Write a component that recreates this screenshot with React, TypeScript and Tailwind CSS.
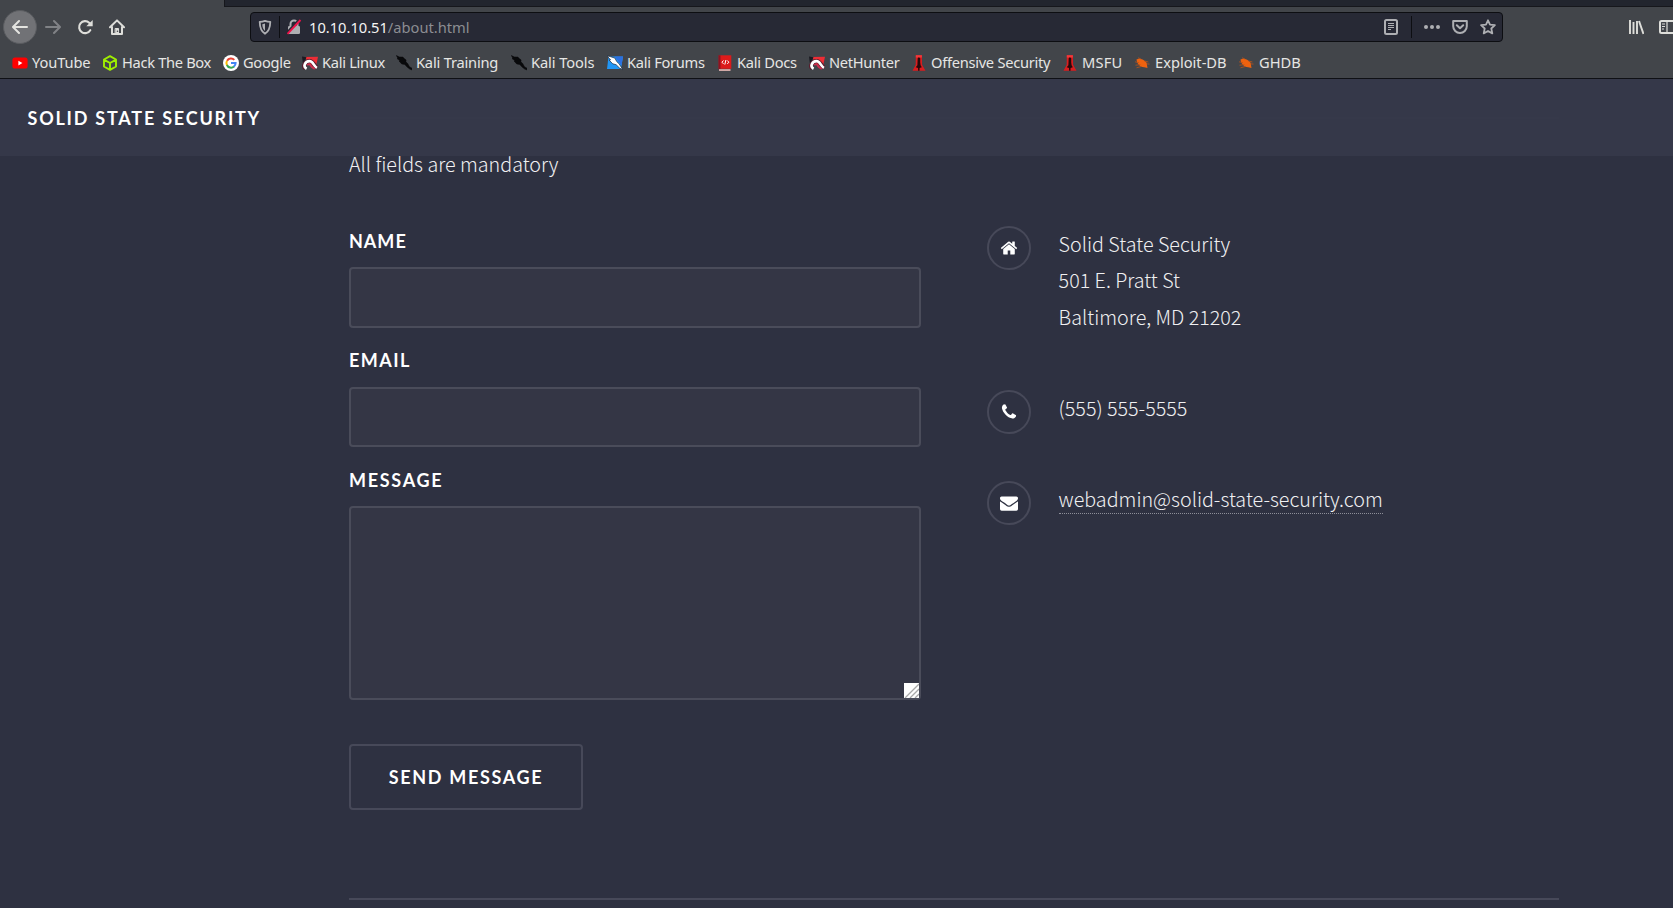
import type { ReactNode } from "react";

/* ---------- Bookmark favicons ---------- */

function Favicon({ children }: { children: ReactNode }) {
  return (
    <svg viewBox="0 0 16 16" className="h-4 w-4 shrink-0">
      {children}
    </svg>
  );
}

const YouTube = () => (
  <Favicon>
    <rect x="0.4" y="2.4" width="15.2" height="11.2" rx="2.6" fill="#f00" />
    <path d="M6.4 5.8v4.6l4-2.3z" fill="#fff" />
  </Favicon>
);

const HackTheBox = () => (
  <Favicon>
    <path
      d="M8 1.2l6 3.3v7L8 14.9 2 11.500v-7zM2.300 4.800L8 8l5.700-3.200M8 8v6.500"
      fill="none"
      stroke="#9fef00"
      strokeWidth="1.9"
      strokeLinejoin="round"
    />
  </Favicon>
);

const Google = () => (
  <Favicon>
    <circle cx="8" cy="8" r="8" fill="#fff" />
    <path d="M4.100 5.800A4.500 4.500 0 0 1 11.300 4.900" fill="none" stroke="#ea4335" strokeWidth="2" />
    <path d="M4 10.200a4.600 4.600 0 0 1 0-4.400" fill="none" stroke="#fbbc05" strokeWidth="2" />
    <path d="M11 11.500A4.500 4.500 0 0 1 3.900 10" fill="none" stroke="#34a853" strokeWidth="2" />
    <path d="M8 8.100h4.600a4.500 4.500 0 0 1-1.700 3.500" fill="none" stroke="#4285f4" strokeWidth="2" />
  </Favicon>
);

const KaliRed = () => (
  <Favicon>
    <path d="M2.500 2L16 1.800 13.500 13.500 8 9z" fill="#ee2d35" />
    <path d="M0 1.500l4.500.8L3.300 5l-2.500 3z" fill="#1b1b22" />
    <path d="M3.200 13.600C.6 10.800 3.400 6 7.800 6c3.400 0 3.700 4.600 7.400 6.800" fill="none" stroke="#5b1a2b" strokeWidth="4.200" />
    <path d="M4.600 13.800C.7 11.800 2.800 6.300 7.600 6.200c3.700 0 3.500 4.300 7.300 6.600" fill="none" stroke="#fff" strokeWidth="2.700" />
    <path d="M5.300 10.300c1.200-2 2.600-1.200 3.500.5.900 1.600 2 2.400 3.900 3.100" fill="none" stroke="#d02c4c" strokeWidth="1.800" />
  </Favicon>
);

const KaliBlack = () => (
  <Favicon>
    <path
      d="M.3.5l3 1.400 3.500.2 1.800 1.700 1.500 1.100-.2 1.900 1.800 1.800 1.800 3.200 2.900 1.600.3 1.800-3-1.100-2.700-2.200-2.200-2.300-3.100-.7-2.700-3 1.100-.2L1 3.600l1-.2z"
      fill="#08090b"
      stroke="#08090b"
      strokeWidth="0.500"
    />
  </Favicon>
);

const KaliForums = () => (
  <Favicon>
    <path d="M1.500 1.500h14.500L14 14H0z" fill="#2196f5" />
    <path d="M7.500 1.500H16l-1.500 9z" fill="#2c6fe0" />
    <path
      d="M0 .8l3.600.9 4.300 1.400 1.800 3.400 2.600 2.500 3.500 5.700-3.300-1.700-3.400-3.300-3.400-.9-3.600-3.700 1.500-.2z"
      fill="#fff"
      stroke="#16263d"
      strokeWidth="0.700"
    />
  </Favicon>
);

const KaliDocs = () => (
  <Favicon>
    <path d="M1.800.3h12.500v13.500H1.800z" fill="#dc1a1a" />
    <path d="M1.500.3h2v14h-2z" fill="#8e1220" />
    <path d="M2 14.200h11.500v1.700H2z" fill="#e3b5b2" />
    <path d="M6.500 5.500L5 7.200l1.500 1.700M10.300 5.500l1.500 1.700-1.500 1.700M8.900 5l-1.100 4.600" fill="none" stroke="#fff" strokeWidth="1" />
  </Favicon>
);

const OffSec = () => (
  <Favicon>
    <path d="M4.800.2h6.100l.2 9.500 3.400 6.100H1.500l3.200-6.100z" fill="#d81d1f" />
    <path d="M4.800.2h6.100v2.300H4.800z" fill="#f0393b" />
    <path d="M7.900 2.300l1.300 1v3.900l.4 3 1.200 2.100-2.200.6-.1 2.900H7.100l-.1-2.900-2.200-.6 1.600-2.100.3-6.900z" fill="#26090b" />
  </Favicon>
);

const ExploitBug = () => (
  <Favicon>
    <path d="M1.500 4.500C3.600 3 7 3.500 9.200 5.600l2.700 2.300.1 2 .5 3-3.300-.7C5.500 12.300 2 9.300 1.500 4.500z" fill="#ee620f" />
    <path d="M0 6.800l4 .9M.5 10.200l5-.5M1.500 12.800l5.500-1.500M6 4L3 2.800M9.500 6l3.900 1M11 8.800l3.500.3" stroke="#b9541a" strokeWidth="0.800" fill="none" />
  </Favicon>
);

const bookmarks: { label: string; icon: () => ReactNode; box: string; tracking: string }[] = [
  { label: "YouTube", icon: YouTube, box: "w-[90px]", tracking: "tracking-[-0.1px]" },
  { label: "Hack The Box", icon: HackTheBox, box: "w-[121px]", tracking: "tracking-[-0.32px]" },
  { label: "Google", icon: Google, box: "w-[79px]", tracking: "tracking-[-0.3px]" },
  { label: "Kali Linux", icon: KaliRed, box: "w-[94px]", tracking: "tracking-[-0.3px]" },
  { label: "Kali Training", icon: KaliBlack, box: "w-[115px]", tracking: "tracking-[-0.2px]" },
  { label: "Kali Tools", icon: KaliBlack, box: "w-[96px]", tracking: "tracking-[-0.1px]" },
  { label: "Kali Forums", icon: KaliForums, box: "w-[110px]", tracking: "tracking-[-0.3px]" },
  { label: "Kali Docs", icon: KaliDocs, box: "w-[92px]", tracking: "tracking-[-0.28px]" },
  { label: "NetHunter", icon: KaliRed, box: "w-[102px]", tracking: "tracking-[-0.3px]" },
  { label: "Offensive Security", icon: OffSec, box: "w-[151px]", tracking: "tracking-[-0.28px]" },
  { label: "MSFU", icon: OffSec, box: "w-[73px]", tracking: "tracking-[0.2px]" },
  { label: "Exploit-DB", icon: ExploitBug, box: "w-[104px]", tracking: "tracking-normal" },
  { label: "GHDB", icon: ExploitBug, box: "w-[70px]", tracking: "tracking-normal" },
];

/* ---------- Browser chrome ---------- */

function Toolbar() {
  return (
    <div className="flex h-[43px] items-start">
      <div className="ml-[3px] mt-[3px] flex h-[34px] w-[34px] shrink-0 items-center justify-center rounded-full border border-[#5a5c60] bg-[#717276]">
        <svg viewBox="0 0 16 16" className="h-4 w-4 shrink-0" fill="none" stroke="#e4e4e0" strokeWidth="2" strokeLinecap="round" strokeLinejoin="round">
          <path d="M15 8H1.200M7 2L1 8l6 6" />
        </svg>
      </div>
      <svg viewBox="0 0 16 16" className="ml-2 mt-3 h-4 w-4 shrink-0" fill="none" stroke="#808286" strokeWidth="2" strokeLinecap="round" strokeLinejoin="round">
        <path d="M1 8h13.800M9 2l6 6-6 6" />
      </svg>
      <svg viewBox="0 0 16 16" className="ml-4 mt-3 h-4 w-4 shrink-0" fill="none" stroke="#dededa" strokeWidth="2.100" strokeLinecap="round">
        <path d="M13.300 11.200A6 6 0 1 1 12.200 3.700l1.400 1.500" />
        <path d="M15.700 1v6.300H9.300z" fill="#dededa" stroke="none" />
      </svg>
      <svg viewBox="0 0 16 16" className="ml-4 mt-3 h-4 w-4 shrink-0" fill="none" stroke="#dededa" strokeWidth="2" strokeLinecap="round" strokeLinejoin="round">
        <path d="M1 8.300L8 1.400l7 6.900M3 8v7h10V8" />
        <path d="M6.500 9.500h3V15h-3z" strokeWidth="1" fill="#dededa" />
        <circle cx="8.500" cy="12.300" r=".8" fill="#42454a" stroke="none" />
      </svg>

      <div className="ml-[125px] mt-[5px] flex h-[30px] w-[1253px] shrink-0 items-center rounded border border-[#0d0e12] bg-[#272935]">
        <svg viewBox="0 0 16 16" className="ml-[6px] h-4 w-4 shrink-0" fill="none" stroke="#aeafb3" strokeWidth="1.800" strokeLinejoin="round">
          <path d="M8 1.800c1.800.7 3.600 1 5.300 1-.1 5.600-1.200 9.600-5.300 12-4.100-2.400-5.200-6.400-5.300-12 1.700 0 3.500-.3 5.300-1z" />
          <path d="M8 4.600v7.300C6 10.300 5.400 8 5.300 5.300z" fill="#aeafb3" stroke="none" />
        </svg>
        <div className="ml-[6px] h-[22px] w-px bg-[#0d0e12]" />
        <svg viewBox="0 0 16 16" className="ml-[6px] h-4 w-4 shrink-0">
          <path d="M4.500 7.500V5a3.500 3.500 0 0 1 7 0v2.500" fill="none" stroke="#aeafb3" strokeWidth="2" />
          <rect x="2" y="7" width="12" height="8" rx="1.300" fill="#aeafb3" />
          <path d="M0.500 14L13 .6" stroke="#272935" strokeWidth="2" />
          <path d="M1.500 14.800L14.500 1" stroke="#f0124a" strokeWidth="1.900" />
        </svg>
        <span className="ml-[7px] whitespace-pre font-['Noto_Sans',sans-serif] text-[14.670px] leading-5 text-[#8c8d92]">
          <span className="text-[#f4f4f4]">10.10.10.51</span>/about.html
        </span>
        <div className="ml-auto mr-[6px] flex items-center">
          <svg viewBox="0 0 16 16" className="h-4 w-4" fill="none" stroke="#aeafb3">
            <rect x="2" y="1" width="12" height="14" rx="1.500" strokeWidth="2" />
            <path d="M5 4.500h6M5 6.500h6M5 8.500h6M5 10.500h3" />
          </svg>
          <div className="ml-[12px] h-[22px] w-px bg-[#0d0e12]" />
          <svg viewBox="0 0 16 16" className="ml-3 h-4 w-4" fill="#aeafb3">
            <circle cx="2" cy="8" r="2" />
            <circle cx="8" cy="8" r="2" />
            <circle cx="14" cy="8" r="2" />
          </svg>
          <svg viewBox="0 0 16 16" className="ml-3 h-4 w-4" fill="none" stroke="#aeafb3" strokeWidth="2" strokeLinejoin="round" strokeLinecap="round">
            <path d="M1.200 2h13.600v5.200a6.800 6.800 0 0 1-13.600 0zM4.800 6.300L8 9.300l3.200-3" />
          </svg>
          <svg viewBox="0 0 16 16" className="ml-3 h-4 w-4" fill="none" stroke="#aeafb3" strokeWidth="1.800" strokeLinejoin="round">
            <path d="M8 1.300l2 4.400 4.900.5-3.600 3.300 1 4.900L8 12l-4.300 2.400 1-4.900L1.100 6.200 6 5.700z" />
          </svg>
        </div>
      </div>

      <svg viewBox="0 0 16 16" className="ml-[125px] mt-3 h-4 w-4 shrink-0" fill="none" stroke="#dededa" strokeWidth="2">
        <path d="M2 1v14M5.500 3v12M9 2v13" strokeWidth="1.900" />
        <path d="M11 2l4.500 13" />
      </svg>
      <svg viewBox="0 0 16 16" className="ml-[15px] mt-3 h-4 w-4 shrink-0" fill="none" stroke="#dededa" strokeWidth="2">
        <rect x="1" y="2" width="15" height="12" rx="1.500" />
        <path d="M8 2v12M3 5h3M3 7.500h3M3 10h2" strokeWidth="1.200" />
      </svg>
    </div>
  );
}

function BrowserChrome() {
  return (
    <div className="h-[79px] w-full overflow-hidden border-b border-[#0f1015] bg-[#42454a]">
      <div className="ml-[224px] h-[7px] border-b border-l border-[#16171c] bg-[#22252e]" />
      <Toolbar />
      <div className="ml-3 flex h-[26px] items-center">
        {bookmarks.map(({ label, icon: Icon, box, tracking }) => (
          <div key={label} className={`flex shrink-0 items-center gap-1 ${box}`}>
            <Icon />
            <span className={`-mt-[2px] whitespace-nowrap font-['Noto_Sans',sans-serif] text-[14.670px] leading-5 text-[#e6e6e4] ${tracking}`}>
              {label}
            </span>
          </div>
        ))}
      </div>
    </div>
  );
}

/* ---------- Page ---------- */

const HOME =
  "M1472 992v480q0 26-19 45t-45 19h-384v-384h-256v384h-384q-26 0-45-19t-19-45v-480q0-1 .5-3t.5-3l575-474 575 474q1 2 1 6zm223-69l-62 74q-8 9-21 11h-3q-13 0-21-7l-692-577-692 577q-12 8-24 7-13-2-21-11l-62-74q-8-10-7-23.5t11-21.5l719-599q32-26 76-26t76 26l244 204v-195q0-14 9-23t23-9h192q14 0 23 9t9 23v408l219 182q10 8 11 21.500t-7 23.500z";
const PHONE =
  "M1600 1240q0 27-10 70.500t-21 68.500q-21 50-122 106-94 51-186 51-27 0-52.500-3.500t-57.500-12.500-47.500-14.500-55.500-20.500-49-18q-98-35-175-83-128-79-264.500-215.500t-215.500-264.500q-48-77-83-175-3-9-18-49t-20.500-55.500-14.500-47.500-12.500-57.500-3.500-52.500q0-92 51-186 56-101 106-122 25-11 68.500-21t70.500-10q14 0 21 3 18 6 53 76 11 19 30 54t35 63.500 31 53.500q3 4 17.500 25t21.500 35.500 7 28.500q0 20-28.500 50t-62 55-62 53-28.500 46q0 9 5 22.500t8.500 20.500 14 24 11.500 19q76 137 174 235t235 174q2 1 19 11.500t24 14 20.500 8.500 22.500 5q18 0 46-28.500t53-62 55-62 50-28.500q14 0 28.500 7t35.500 21.500 25 17.500q25 15 53.500 31t63.500 35 54 30q70 35 76 53 3 7 3 21z";
const ENVELOPE =
  "M1792 710v794q0 66-47 113t-113 47h-1472q-66 0-113-47t-47-113v-794q44 49 101 87 362 246 497 345 57 42 92.500 65.500t94.500 48 110 24.500h2q51 0 110-24.500t94.500-48 92.500-65.500q170-123 498-345 57-39 100-87zm0-294q0 79-49 151t-122 123q-376 261-468 325-10 7-42.500 31t-54 38.500-52 32.500-57.500 27-50 9h-2q-23 0-50-9t-57.500-27-52-32.500-54-38.500-42.500-31q-91-64-262-182.500t-205-142.500q-62-42-117-115.500t-55-136.500q0-78 41.500-130t118.500-52h1472q65 0 112.500 47t47.500 113z";

function Contact({ path, children, className }: { path: string; children: ReactNode; className: string }) {
  return (
    <li className={`flex gap-7 ${className}`}>
      <span className="flex h-11 w-11 shrink-0 items-center justify-center rounded-full border-2 border-[#474959]">
        <svg viewBox="0 0 1792 1792" className="h-[18px] w-[18px]" fill="#fff">
          <path d={path} />
        </svg>
      </span>
      <div className="-ml-[0.4px]">{children}</div>
    </li>
  );
}

function Label({ children, className }: { children: ReactNode; className: string }) {
  return (
    <label className={`block h-[27px] pt-px font-['Lato',sans-serif] text-[18px] font-bold leading-[27px] text-white ${className}`}>
      {children}
    </label>
  );
}

export default function App() {
  return (
    <div className="h-[908px] w-full overflow-hidden bg-[#2e3141]">
      <BrowserChrome />
      <header className="relative flex h-[77px] items-center bg-[#353849] pl-[27.500px] pt-px">
        <div className="absolute left-[349px] top-[38px] h-[2px] w-[1210px] bg-[#36394a]" />
        <span className="whitespace-nowrap font-['Lato',sans-serif] text-[18px] font-bold tracking-[1.780px] text-white">
          SOLID STATE SECURITY
        </span>
      </header>

      <main className="ml-[349px] w-[1210px] font-['Noto_Sans_CJK_SC',sans-serif] text-[19.720px] font-light leading-[36.300px] text-[#f0f0f2]">
        <p className="-mt-[10px] h-[36px]">All fields are mandatory</p>
        <div className="flex">
          <form className="mt-[45px] w-[572px]">
            <Label className="tracking-[1px]">NAME</Label>
            <input className="mt-[13px] block h-[61px] w-full rounded border-2 border-[#4a4c5a] bg-[#343645]" />
            <div className="h-[18px]" />
            <Label className="tracking-[1.450px]">EMAIL</Label>
            <input className="mt-[14px] block h-[60px] w-full rounded border-2 border-[#4a4c5a] bg-[#343645]" />
            <div className="h-[19px]" />
            <Label className="tracking-[1.700px]">MESSAGE</Label>
            <div className="mt-[13px] flex h-[194px] w-full items-end justify-end rounded border-2 border-[#4a4c5a] bg-[#343645]">
              <svg viewBox="0 0 15 15" className="h-[15px] w-[15px]">
                <path d="M0 0h15v15H0z" fill="#fff" />
                <path d="M1 15L15 1M6 15l9-9M11 15l4-4" stroke="#a8a8a8" strokeWidth="1.300" />
              </svg>
            </div>
            <button
              type="button"
              className="mt-11 block h-[66px] w-[234px] rounded border-2 border-[#474959] pt-px text-center font-['Lato',sans-serif] text-[18px] font-bold tracking-[1.650px] text-white"
            >
              SEND MESSAGE
            </button>
          </form>
          <ul className="ml-[66px] mt-11">
            <Contact path={HOME} className="h-[164px]">
              Solid State Security
              <br />
              501 E. Pratt St
              <br />
              Baltimore, MD 21202
            </Contact>
            <Contact path={PHONE} className="h-[91px]">
              (555) 555-5555
            </Contact>
            <Contact path={ENVELOPE} className="h-[91px]">
              <a className="block h-[33px] border-b border-dotted border-[#8d8e98]">webadmin@solid-state-security.com</a>
            </Contact>
          </ul>
        </div>
        <div className="mt-[88px] h-[2px] bg-[#474959]" />
      </main>
    </div>
  );
}
